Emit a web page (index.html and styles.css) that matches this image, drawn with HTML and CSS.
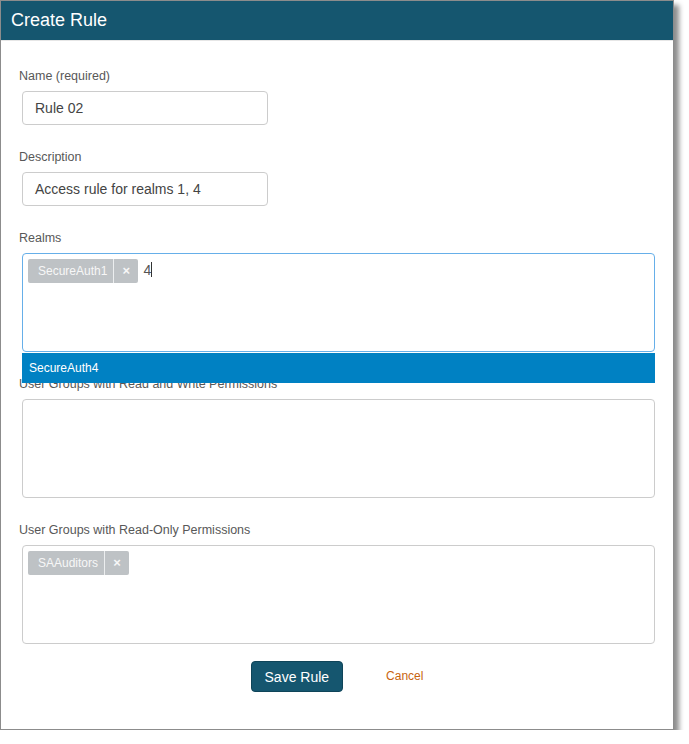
FILE: index.html
```html
<!DOCTYPE html>
<html>
<head>
<meta charset="utf-8">
<title>Create Rule</title>
<link rel="stylesheet" href="styles.css">
</head>
<body>
<div class="dialog">
  <div class="dialog-header">Create Rule</div>
  <div class="dialog-body">
    <div class="field">
      <label class="field-label">Name (required)</label>
      <div class="text-input">Rule 02</div>
    </div>
    <div class="field">
      <label class="field-label">Description</label>
      <div class="text-input">Access rule for realms 1, 4</div>
    </div>
    <div class="field">
      <label class="field-label">Realms</label>
      <div class="tag-box-wrap">
        <div class="tag-box focused">
          <span class="tag"><span class="tag-text">SecureAuth1</span><span class="tag-remove">×</span></span>
          <span class="typed">4</span><span class="caret"></span>
        </div>
        <div class="dropdown">
          <div class="dropdown-item">SecureAuth4</div>
        </div>
      </div>
    </div>
    <div class="field">
      <label class="field-label">User Groups with Read and Write Permissions</label>
      <div class="tag-box"></div>
    </div>
    <div class="field">
      <label class="field-label">User Groups with Read-Only Permissions</label>
      <div class="tag-box">
        <span class="tag"><span class="tag-text">SAAuditors</span><span class="tag-remove">×</span></span>
      </div>
    </div>
    <div class="actions">
      <button class="btn-primary">Save Rule</button>
      <a class="btn-link">Cancel</a>
    </div>
  </div>
</div>
</body>
</html>
```

FILE: styles.css
```css
html, body {
  margin: 0;
  padding: 0;
  background: #ffffff;
}
body {
  font-family: "Liberation Sans", Arial, sans-serif;
  color: #555;
}
.dialog {
  width: 672px;
  border: 1px solid #8c8c8c;
  background: #fff;
  box-shadow: 5px 5px 5px rgba(0, 0, 0, 0.45);
}
.dialog-header {
  height: 39px;
  line-height: 39px;
  background: #15566f;
  color: #fff;
  font-size: 18px;
  padding-left: 10px;
  border-bottom: 1px solid #e6e6e6;
}
.dialog-body {
  padding: 26px 18px 37px 18px;
}
.field {
  margin-bottom: 23px;
}
.field-label {
  display: block;
  font-size: 12.5px;
  line-height: 18px;
  color: #585858;
  margin-bottom: 6px;
}
.text-input {
  margin-left: 3px;
  height: 32px;
  border: 1px solid #cccccc;
  border-radius: 4px;
  font-size: 14px;
  line-height: 32px;
  color: #444;
  padding-left: 12px;
  box-sizing: content-box;
  width: 232px;
}
.tag-box-wrap {
  position: relative;
  margin-left: 3px;
}
.tag-box {
  margin-left: 3px;
  height: 91px;
  border: 1px solid #cccccc;
  border-radius: 4px;
  padding: 5px 5px 1px 5px;
  display: flex;
  align-items: flex-start;
}
.tag-box-wrap .tag-box {
  margin-left: 0;
}
.tag-box.focused {
  border-color: #66afe9;
}
.tag {
  display: flex;
  height: 24px;
  background: #bec2c5;
  border-radius: 2px;
  color: #f7f7f7;
  font-size: 12px;
  line-height: 24px;
}
.tag-text {
  padding: 0 6px 0 10px;
  border-right: 1px solid #eceeef;
}
.tag-remove {
  width: 24px;
  text-align: center;
  font-weight: bold;
  font-size: 13px;
}
.typed {
  font-size: 14px;
  color: #555;
  margin-left: 5px;
  line-height: 20px;
  margin-top: 1px;
}
.caret {
  width: 1px;
  height: 15px;
  background: #333;
  margin-top: 3px;
}
.dropdown {
  position: absolute;
  left: 0;
  right: 0;
  top: 100px;
  background: #0081c3;
  height: 30px;
}
.dropdown-item {
  color: #fff;
  font-size: 12px;
  line-height: 30px;
  padding-left: 7px;
}
.actions {
  display: flex;
  justify-content: center;
  align-items: center;
  gap: 43px;
  margin-top: -6px;
}
.btn-primary {
  font-family: "Liberation Sans", Arial, sans-serif;
  background: #15566f;
  border: 1px solid #0f4459;
  border-radius: 4px;
  color: #fff;
  font-size: 14px;
  height: 31px;
  padding: 0 13px;
  margin: 0;
}
.btn-link {
  color: #c8640f;
  font-size: 12px;
  margin-top: -2px;
}
```
